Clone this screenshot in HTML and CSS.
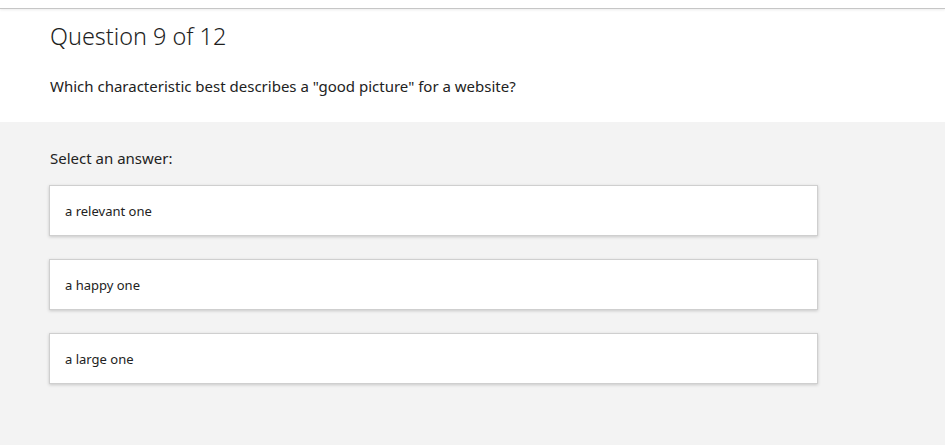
FILE: index.html
```html
<!DOCTYPE html>
<html>
<head>
<meta charset="utf-8">
<link rel="stylesheet" href="styles.css">
</head>
<body>
<div class="topbar"></div>
<section class="question">
  <h1 class="title">Question 9 of 12</h1>
  <p class="prompt">Which characteristic best describes a "good picture" for a website?</p>
</section>
<section class="answers">
  <p class="label">Select an answer:</p>
  <div class="options">
    <div class="option">a relevant one</div>
    <div class="option">a happy one</div>
    <div class="option">a large one</div>
  </div>
</section>
</body>
</html>
```
FILE: styles.css
```css
html, body {
  margin: 0;
  padding: 0;
  height: 100%;
}
body {
  font-family: "Noto Sans", "Open Sans", sans-serif;
  color: #222;
  background: #f3f3f3;
  display: flex;
  flex-direction: column;
}
.topbar {
  height: 8px;
  background: #fff;
  border-bottom: 1px solid #c6c6c6;
  box-shadow: 0 1px 3px rgba(0,0,0,0.08);
  position: relative;
  z-index: 1;
}
.question {
  background: #fff;
  padding: 12px 50px 0;
  height: 113px;
  box-sizing: border-box;
}
.title {
  margin: 0;
  font-size: 23.4px;
  font-weight: 300;
  line-height: 30px;
  color: #1f1f1f;
}
.prompt {
  margin: 25px 0 0;
  font-size: 15px;
  line-height: 20px;
  color: #222;
}
.answers {
  flex: 1;
  padding: 26px 49px 0;
}
.label {
  margin: 0 0 0 1px;
  font-size: 15px;
  line-height: 20px;
}
.options {
  margin-top: 17px;
  width: 769px;
  display: flex;
  flex-direction: column;
  gap: 23px;
}
.option {
  background: #fff;
  border: 1px solid #cfcfcf;
  box-shadow: 0 1px 3px rgba(0,0,0,0.18);
  box-sizing: border-box;
  height: 51px;
  padding: 0 15px;
  display: flex;
  align-items: center;
  font-size: 13px;
  color: #222;
}
```
